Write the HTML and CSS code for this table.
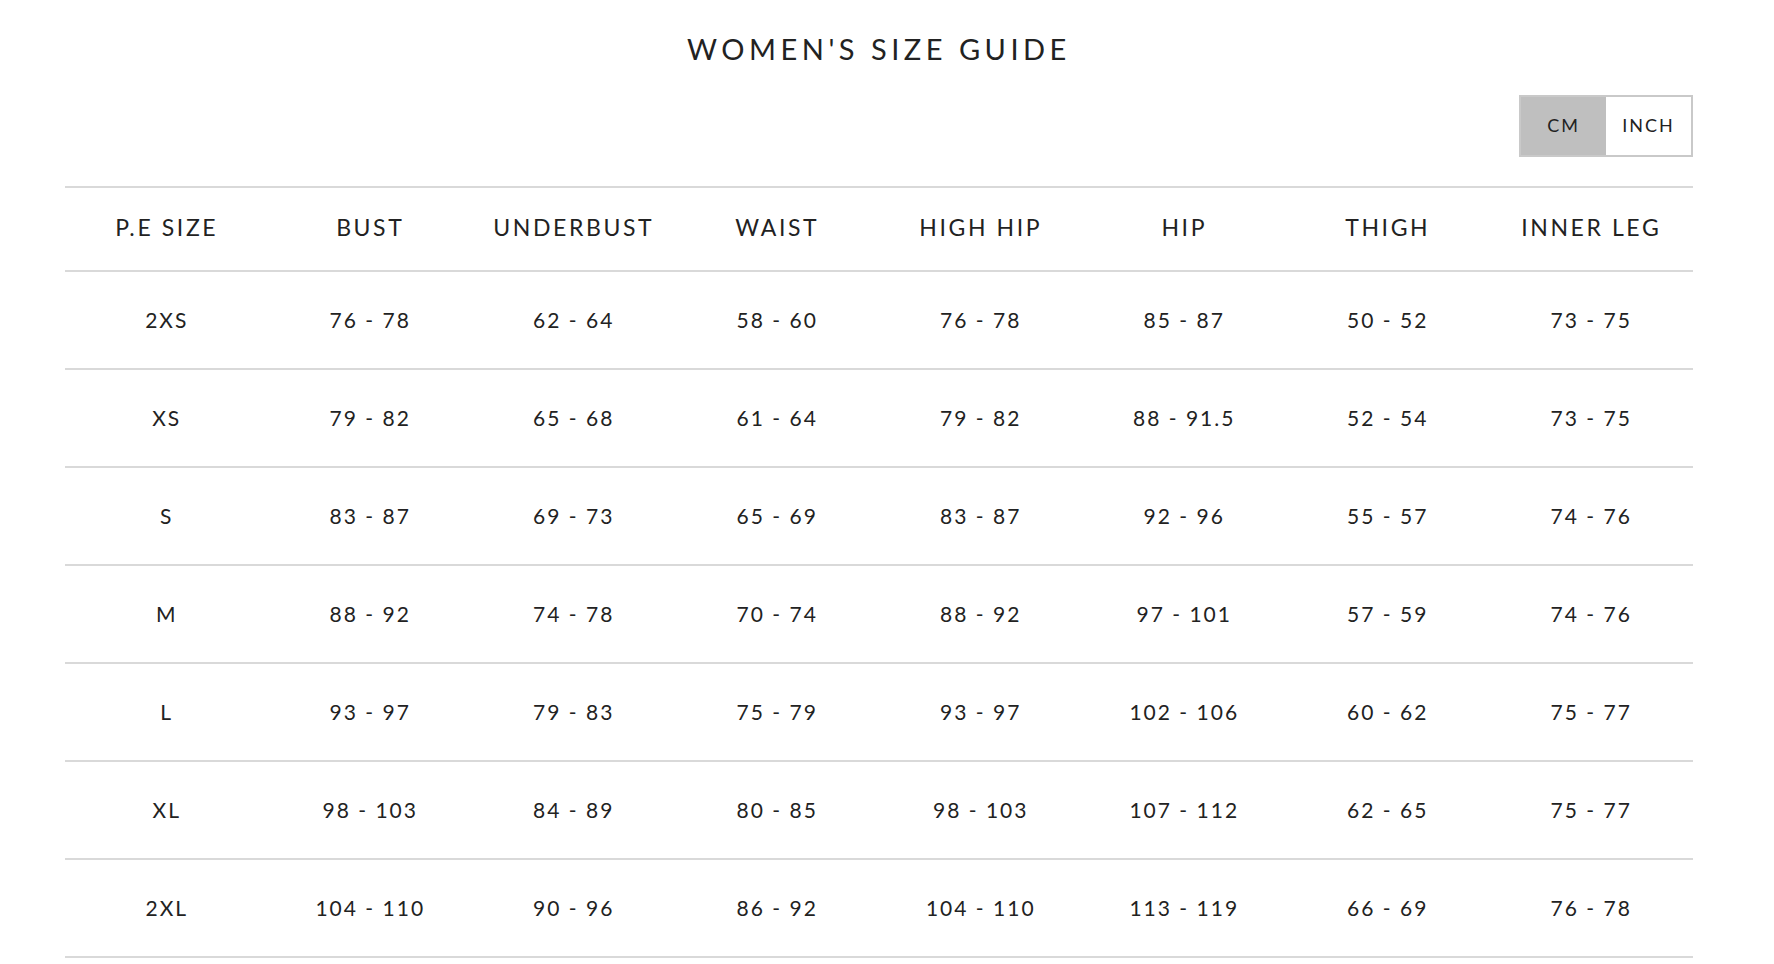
FILE: index.html
```html
<!DOCTYPE html>
<html>
<head>
<meta charset="utf-8">
<link rel="stylesheet" href="styles.css">
</head>
<body>
<div class="guide">
  <h1 class="title">WOMEN'S SIZE GUIDE</h1>
  <div class="units">
    <div class="toggle">
      <span class="unit active">CM</span>
      <span class="unit">INCH</span>
    </div>
  </div>
  <div class="table">
    <div class="row head">
      <div>P.E SIZE</div><div>BUST</div><div>UNDERBUST</div><div>WAIST</div><div>HIGH HIP</div><div>HIP</div><div>THIGH</div><div>INNER LEG</div>
    </div>
    <div class="row"><div>2XS</div><div>76 - 78</div><div>62 - 64</div><div>58 - 60</div><div>76 - 78</div><div>85 - 87</div><div>50 - 52</div><div>73 - 75</div></div>
    <div class="row"><div>XS</div><div>79 - 82</div><div>65 - 68</div><div>61 - 64</div><div>79 - 82</div><div>88 - 91.5</div><div>52 - 54</div><div>73 - 75</div></div>
    <div class="row"><div>S</div><div>83 - 87</div><div>69 - 73</div><div>65 - 69</div><div>83 - 87</div><div>92 - 96</div><div>55 - 57</div><div>74 - 76</div></div>
    <div class="row"><div>M</div><div>88 - 92</div><div>74 - 78</div><div>70 - 74</div><div>88 - 92</div><div>97 - 101</div><div>57 - 59</div><div>74 - 76</div></div>
    <div class="row"><div>L</div><div>93 - 97</div><div>79 - 83</div><div>75 - 79</div><div>93 - 97</div><div>102 - 106</div><div>60 - 62</div><div>75 - 77</div></div>
    <div class="row"><div>XL</div><div>98 - 103</div><div>84 - 89</div><div>80 - 85</div><div>98 - 103</div><div>107 - 112</div><div>62 - 65</div><div>75 - 77</div></div>
    <div class="row"><div>2XL</div><div>104 - 110</div><div>90 - 96</div><div>86 - 92</div><div>104 - 110</div><div>113 - 119</div><div>66 - 69</div><div>76 - 78</div></div>
  </div>
</div>
</body>
</html>
```
FILE: styles.css
```css
html, body {
  margin: 0;
  padding: 0;
  background: #ffffff;
}
body {
  font-family: "Lato", "Liberation Sans", sans-serif;
  color: #222222;
}
.guide {
  width: 1628px;
  margin-left: 65px;
}
.title {
  margin: 0;
  padding-top: 31px;
  height: 36px;
  line-height: 36px;
  font-size: 29px;
  font-weight: 400;
  letter-spacing: 4.5px;
  text-align: center;
}
.units {
  display: flex;
  justify-content: flex-end;
  margin-top: 28px;
}
.toggle {
  display: flex;
  width: 174px;
  height: 62px;
  box-sizing: border-box;
  border: 2px solid #c9c9c9;
}
.unit {
  display: flex;
  align-items: center;
  justify-content: center;
  padding-bottom: 2px;
  font-size: 18px;
  letter-spacing: 2px;
  flex: 1;
}
.unit.active {
  background: #bfbfbf;
  flex: 0 0 85px;
}
.table {
  margin-top: 29px;
}
.row {
  display: grid;
  grid-template-columns: repeat(8, 1fr);
  height: 98px;
  box-sizing: border-box;
  padding-bottom: 2px;
  border-bottom: 2px solid #d9d9d9;
  align-items: center;
  text-align: center;
  font-size: 21px;
  letter-spacing: 2px;
}
.row.head {
  height: 86px;
  padding-bottom: 4px;
  border-top: 2px solid #d9d9d9;
  font-size: 23px;
  letter-spacing: 2.6px;
}
```
